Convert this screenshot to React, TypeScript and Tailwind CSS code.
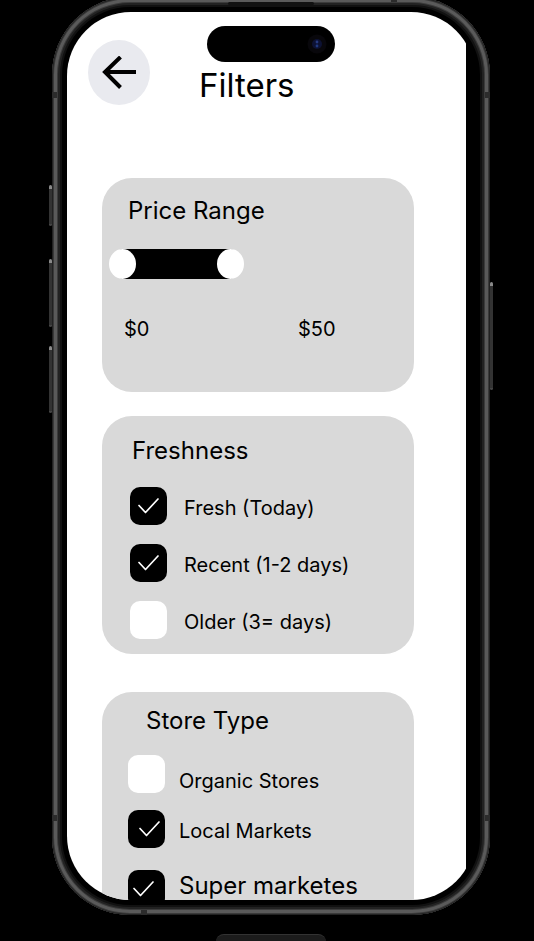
import { useState } from "react";

type Option = {
  id: string;
  label: string;
  checked: boolean;
  row: string;
  text: string;
  tick: string;
};

const freshness: Option[] = [
  { id: "fresh", label: "Fresh (Today)", checked: true, row: "items-center", text: "text-xl/6", tick: "justify-center" },
  { id: "recent", label: "Recent (1-2 days)", checked: true, row: "items-center", text: "text-xl/6", tick: "justify-center" },
  { id: "older", label: "Older (3= days)", checked: false, row: "items-center", text: "text-xl/6", tick: "justify-center" },
];

const stores: Option[] = [
  { id: "organic", label: "Organic Stores", checked: false, row: "items-end", text: "text-xl/6", tick: "justify-center" },
  { id: "local", label: "Local Markets", checked: true, row: "mt-[17px] items-center", text: "text-xl/6", tick: "justify-end" },
  { id: "super", label: "Super marketes", checked: true, row: "mt-[22px] h-[30px] items-start", text: "text-2xl/6", tick: "justify-start" },
];

function CheckRow({ option, gap }: { option: Option; gap: string }) {
  const [checked, setChecked] = useState(option.checked);
  return (
    <label htmlFor={option.id} className={`flex ${gap} ${option.row}`}>
      <span className="relative block h-[38px] w-[37px] shrink-0">
        <input
          id={option.id}
          type="checkbox"
          checked={checked}
          onChange={(e) => setChecked(e.target.checked)}
          className="block size-full appearance-none rounded-[10px] bg-white checked:bg-black"
        />
        {checked && (
          <span className={`pointer-events-none absolute inset-0 flex items-center px-[5px] ${option.tick}`}>
            <svg viewBox="0 0 21 16" className="h-4 w-[21px]" fill="none" stroke="white" strokeWidth="1.7" strokeLinecap="round" strokeLinejoin="round" aria-hidden="true">
              <path d="M1 7.5 L7.5 14.5 L20 1" />
            </svg>
          </span>
        )}
      </span>
      <span className={`pt-1 whitespace-nowrap ${option.text}`}>{option.label}</span>
    </label>
  );
}

const thumb =
  "pointer-events-none absolute inset-0 m-0 h-[30px] w-full appearance-none bg-transparent [&::-webkit-slider-thumb]:pointer-events-auto [&::-webkit-slider-thumb]:h-[30px] [&::-webkit-slider-thumb]:w-[27px] [&::-webkit-slider-thumb]:appearance-none [&::-webkit-slider-thumb]:rounded-[50%] [&::-webkit-slider-thumb]:bg-white";

function PriceRange() {
  const [low, setLow] = useState(0);
  const [high, setHigh] = useState(50);
  return (
    <section className="h-[214px] rounded-[30px] bg-[#d9d9d9] pt-[17px]">
      <h2 className="pl-[26px] text-2xl/8">Price Range</h2>
      <div className="relative mt-[22px] ml-[7px] h-[30px] w-[135px]">
        <div className="mx-px h-full rounded-full bg-black" />
        <input type="range" aria-label="Minimum price" min={0} max={50} value={low} onChange={(e) => setLow(+e.target.value)} className={thumb} />
        <input type="range" aria-label="Maximum price" min={0} max={50} value={high} onChange={(e) => setHigh(+e.target.value)} className={thumb} />
      </div>
      <div className="mt-[38px] flex pl-[22px] text-xl/6">
        <span className="w-[174px]">${low}</span>
        <span>${high}</span>
      </div>
    </section>
  );
}

function SideButton({ place }: { place: string }) {
  return <div className={`absolute w-[3px] rounded-sm border-t-4 border-b-2 border-t-[#8a8a8a] border-b-[#444] bg-[#333] ${place}`} />;
}

function Antenna({ place }: { place: string }) {
  return <div className={`absolute bg-[#2c2c2c] ${place}`} />;
}

export default function App() {
  return (
    <div className="overflow-hidden bg-black pr-11 pl-[52px] font-['Inter',sans-serif] text-black">
      <div className="relative -mt-[3px] rounded-[78px] bg-black p-[15px] shadow-[inset_0_0_0_1px_#222,inset_0_0_0_2px_#3a3a3a,inset_0_0_0_5px_#5a5a5a,inset_0_0_0_6px_#3c3c3c,inset_0_0_0_8px_#222,inset_0_0_0_10px_#111]">
        <SideButton place="-left-[3px] top-[188px] h-[41px]" />
        <SideButton place="-left-[3px] top-[262px] h-[68px]" />
        <SideButton place="-left-[3px] top-[349px] h-[67px]" />
        <SideButton place="-right-[3px] top-[285px] h-[108px]" />
        <Antenna place="left-0 top-[95px] h-[6px] w-[5px]" />
        <Antenna place="right-0 top-[95px] h-[6px] w-[5px]" />
        <Antenna place="left-0 bottom-[94px] h-[6px] w-[5px]" />
        <Antenna place="right-0 bottom-[94px] h-[6px] w-[5px]" />
        <Antenna place="left-[89px] bottom-0 h-[5px] w-[6px]" />
        <Antenna place="right-[93px] top-0 h-[5px] w-[6px]" />
        <div className="absolute top-[5px] left-1/2 h-[3px] w-[86px] -translate-x-1/2 rounded-full bg-[#111]" />

        <div className="overflow-hidden rounded-[64px] bg-black pr-[9px]">
          <main className="bg-white">
            <header className="flex items-start gap-[49px] pt-7 pl-[21px]">
              <button type="button" aria-label="Back" className="flex h-[65px] w-[62px] items-center justify-center rounded-[50%] bg-[#e9eaef]">
                <svg viewBox="0 0 36 34" className="h-[34px] w-9" fill="none" stroke="black" strokeWidth="4" aria-hidden="true">
                  <path d="M35 16 H4 M19.500 1 L4 16 L19.500 31.500" />
                </svg>
              </button>
              <h1 className="pt-[25px] text-[33px]/10">Filters</h1>
            </header>

            <div className="mt-[73px] mr-[52px] ml-[35px]">
              <PriceRange />

              <section className="mt-6 h-[238px] rounded-[30px] bg-[#d9d9d9] pt-[19px] pl-7">
                <h2 className="pl-[2px] text-2xl/8">Freshness</h2>
                <div className="mt-5 flex flex-col gap-[19px]">
                  {freshness.map((o) => (
                    <CheckRow key={o.id} option={o} gap="gap-[17px]" />
                  ))}
                </div>
              </section>

              <section className="mt-[38px] rounded-t-[30px] bg-[#d9d9d9] pt-[13px] pl-[26px]">
                <h2 className="pl-[18px] text-2xl/8">Store Type</h2>
                <div className="mt-[18px] flex flex-col">
                  {stores.map((o) => (
                    <CheckRow key={o.id} option={o} gap="gap-[14px]" />
                  ))}
                </div>
              </section>
            </div>
          </main>
        </div>

        <div className="absolute top-[29px] left-1/2 flex h-9 w-32 -translate-x-1/2 items-center justify-end rounded-full bg-black pr-2">
          <svg viewBox="0 0 20 20" className="size-5" aria-hidden="true">
            <circle cx="10" cy="10" r="9.500" fill="#08070b" />
            <circle cx="10" cy="10" r="5" fill="#0d1233" />
            <circle cx="10" cy="8" r="1.400" fill="#263a80" />
            <circle cx="10" cy="12" r="1.400" fill="#1f3880" />
          </svg>
        </div>
      </div>

      <div className="mx-auto mt-[19px] h-2 w-[110px] rounded-t-[14px] border-t border-[#333] bg-[#1c1c1c]" />
    </div>
  );
}
